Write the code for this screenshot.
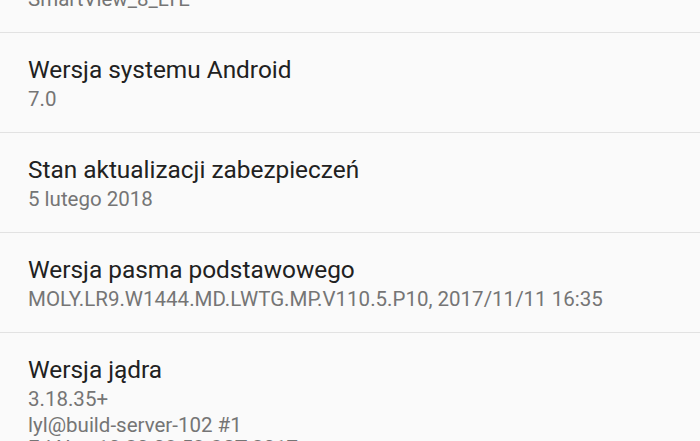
export default function App() {
  const rows = [
    { title: "Numer modelu", lines: ["SmartView_8_LTE"] },
    { title: "Wersja systemu Android", lines: ["7.0"] },
    { title: "Stan aktualizacji zabezpieczeń", lines: ["5 lutego 2018"] },
    {
      title: "Wersja pasma podstawowego",
      lines: ["MOLY.LR9.W1444.MD.LWTG.MP.V110.5.P10, 2017/11/11 16:35"],
    },
    {
      title: "Wersja jądra",
      lines: ["3.18.35+", "lyl@build-server-102 #1", "Fri Nov 10 20:08:53 CST 2017"],
    },
  ];

  return (
    <div className="h-[441px] w-[700px] overflow-hidden bg-[#fafafa] font-['Roboto',sans-serif]">
      <div className="-mt-[67px]">
        {rows.map((row, i) => (
          <div
            key={i}
            className={`px-[28px] pt-[21px] pb-[20px] ${
              i > 0 ? "border-t border-[#e2e2e2]" : ""
            }`}
          >
            <div className="text-[24.4px] leading-[32px] text-[#212121]">
              {row.title}
            </div>
            {row.lines.map((line, j) => (
              <div
                key={j}
                className={`text-[20.5px] leading-[26px] text-[#757575] whitespace-nowrap ${
                  j === 2 ? "-mt-[3px]" : ""
                }`}
              >
                {line}
              </div>
            ))}
          </div>
        ))}
      </div>
    </div>
  );
}
